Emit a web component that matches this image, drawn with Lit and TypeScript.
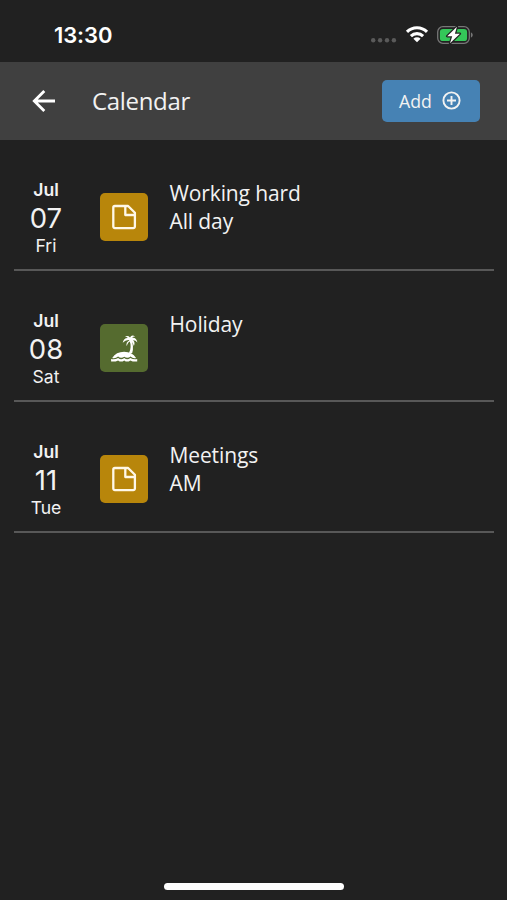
import { LitElement, html, css, svg } from "lit";
import { customElement, property } from "lit/decorators.js";
import { classMap } from "lit/directives/class-map.js";

interface CalendarEvent {
  month: string;
  day: string;
  weekday: string;
  kind: "note" | "holiday";
  title: string;
  detail?: string;
}

const EVENTS: CalendarEvent[] = [
  { month: "Jul", day: "07", weekday: "Fri", kind: "note", title: "Working hard", detail: "All day" },
  { month: "Jul", day: "08", weekday: "Sat", kind: "holiday", title: "Holiday" },
  { month: "Jul", day: "11", weekday: "Tue", kind: "note", title: "Meetings", detail: "AM" },
];

@customElement("status-bar")
class StatusBar extends LitElement {
  static styles = css`
    :host {
      display: flex;
      box-sizing: border-box;
      height: 62px;
      padding: 8px 34px 0 54px;
      justify-content: space-between;
      align-items: center;
      color: #fff;
    }
    .time {
      font: 600 22px/28px Inter, sans-serif;
      letter-spacing: -0.1px;
    }
    .signals {
      display: block;
      margin-top: 6px;
    }
  `;
  render() {
    return html`
      <span class="time">13:30</span>
      <svg class="signals" width="103" height="24" viewBox="0 0 103 24">
        <g fill="#5a5a5a">
          <circle cx="3.2" cy="14.2" r="2.2" />
          <circle cx="10.1" cy="14.2" r="2.2" />
          <circle cx="17" cy="14.2" r="2.2" />
          <circle cx="23.9" cy="14.2" r="2.2" />
        </g>
        <g fill="none" stroke="#fff" stroke-width="3.1">
          <path d="M37 5.9a14.2 14.2 0 0 1 20 0" />
          <path d="M40.9 10.1a8.7 8.7 0 0 1 12.2 0" />
        </g>
        <path d="M43.4 12.7a5.2 5.2 0 0 1 7.2 0L47 16.3z" fill="#fff" />
        <rect x="67.7" y="0.7" width="31.6" height="16.6" rx="5.2" fill="none" stroke="#777" stroke-width="1.3" />
        <rect x="69.9" y="2.9" width="27.2" height="12.2" rx="3.2" fill="#34c759" />
        <path d="M100.9 6.3v5.4q1.9-.9 1.9-2.7t-1.9-2.7z" fill="#777" />
        <path d="M86.9.8L77.2 10.2h5L80 17.3l9.9-9.6h-5z" fill="#fff" stroke="#222" stroke-width="2.4" stroke-linejoin="round" paint-order="stroke" />
      </svg>
    `;
  }
}

@customElement("app-header")
class AppHeader extends LitElement {
  static styles = css`
    :host {
      display: flex;
      box-sizing: border-box;
      height: 77.5px;
      padding: 0 27px 0 32px;
      align-items: center;
      background: #404040;
      color: #f2f2f2;
      font-family: "Open Sans", sans-serif;
    }
    .back {
      display: block;
      margin-right: 36px;
    }
    .title {
      flex: 1;
      font-size: 24px;
      letter-spacing: -0.33px;
      line-height: 32px;
    }
    .add {
      display: flex;
      box-sizing: border-box;
      width: 98px;
      height: 42.5px;
      padding: 0 0 0 17px;
      gap: 10px;
      align-items: center;
      border: 0;
      border-radius: 5px;
      background: #4682b4;
      color: #f2f2f2;
      font: 400 17.7px/24px "Open Sans", sans-serif;
    }
  `;
  render() {
    return html`
      <svg class="back" width="24" height="24" viewBox="0 0 24 24" fill="none" stroke="#fff" stroke-width="2.8">
        <path d="M23 12H3M12.3 2L2.3 12l10 10" />
      </svg>
      <span class="title">Calendar</span>
      <button class="add">
        Add
        <svg width="19" height="19" viewBox="0 0 19 19" fill="none" stroke="#f2f2f2" stroke-width="1.9">
          <circle cx="9.5" cy="9.5" r="8.1" />
          <path d="M9.5 5v9M5 9.5h9" />
        </svg>
      </button>
    `;
  }
}

const noteIcon = svg`
  <path d="M14.9 13h13.2l6.8 6.8v13.7a1.6 1.6 0 0 1-1.6 1.6H14.9a1.6 1.6 0 0 1-1.6-1.6V14.6a1.6 1.6 0 0 1 1.6-1.6M25.3 13v9h9.6"
    fill="none" stroke="#fff8e8" stroke-width="2.3" stroke-linejoin="round" />`;

const palmIcon = svg`
  <g fill="#fff">
    <path d="M29.4 16.5q2.6 6-.4 12.5h3.2q2-7-.9-13z" />
    <path d="M29.6 16.2q-3.9-.6-6.9 2.6 1-5 5.2-4.8-1.5-1.4-3.3-1.1 3-2.2 5.4.5 1.6-3.1 5.2-1-2.4-.1-3 1.4 4.2-.6 5.2 4.7-2.3-2.6-4.3-2.2 2.4 2.2.8 5.7-.8-3.4-3.2-5-2.9 1-3.9 5.2-1.4-3.8 2.8-6z" />
    <path d="M12.2 33.9q3.9-6.1 11.9-6.1 8 0 12 6.1-2.8 1-5.6-1.3-3.1 2.4-6.2.1-3.2 2.3-6.2-.1-2.9 2.2-5.9 1.3z" />
    <path d="M11.1 35q4 .7 7-1.1 3.1 2.5 6.1 0 3.1 2.5 6.1 0 3.1 1.8 6.9 1.1v2.5q-3.9.5-6.9-1.1-3.1 2.4-6.1 0-3 2.4-6.1 0-3 1.6-7 1.1z" />
  </g>`;

@customElement("event-row")
class EventRow extends LitElement {
  @property({ attribute: false }) event!: CalendarEvent;

  static styles = css`
    :host {
      display: flex;
      box-sizing: border-box;
      height: 131px;
      padding-top: 37.5px;
      border-bottom: 2px solid #585858;
      color: #f2f2f2;
    }
    .date {
      width: 64px;
      margin-right: 22px;
      text-align: center;
      font: 400 17.6px/26px Inter, sans-serif;
    }
    .month {
      font-weight: 600;
    }
    .day {
      font-size: 27.5px;
      line-height: 30px;
    }
    .tile {
      flex: none;
      width: 48px;
      height: 48px;
      margin: 16.2px 22px 0 0;
      border-radius: 5px;
    }
    .note {
      background: #b8860b;
    }
    .holiday {
      background: #556b2f;
    }
    .text {
      padding-top: 2.4px;
      margin-left: -0.5px;
      font: 400 21px/28px "Open Sans", sans-serif;
      letter-spacing: -0.12px;
    }
  `;
  render() {
    const e = this.event;
    return html`
      <div class="date">
        <div class="month">${e.month}</div>
        <div class="day">${e.day}</div>
        <div class="weekday">${e.weekday}</div>
      </div>
      <svg class=${classMap({ tile: true, note: e.kind === "note", holiday: e.kind === "holiday" })} viewBox="0 0 48 48">
        ${e.kind === "note" ? noteIcon : palmIcon}
      </svg>
      <div class="text">
        <div>${e.title}</div>
        <div>${e.detail ?? ""}</div>
      </div>
    `;
  }
}

@customElement("app-root")
class AppRoot extends LitElement {
  static styles = css`
    :host {
      display: flex;
      flex-direction: column;
      box-sizing: border-box;
      height: 900px;
      background: #212121;
    }
    .list {
      flex: 1;
      padding: 0 13px 0 14px;
    }
    .home {
      width: 180px;
      height: 7px;
      margin: 0 0 10px 164px;
      border-radius: 4px;
      background: #fff;
    }
  `;
  render() {
    return html`
      <status-bar></status-bar>
      <app-header></app-header>
      <div class="list">${EVENTS.map((e) => html`<event-row .event=${e}></event-row>`)}</div>
      <div class="home"></div>
    `;
  }
}
